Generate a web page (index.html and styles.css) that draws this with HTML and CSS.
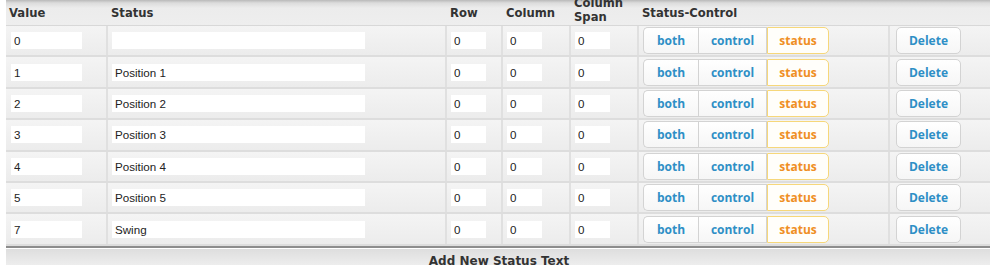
FILE: index.html
```html
<!DOCTYPE html>
<html>
<head>
<meta charset="utf-8">
<link rel="stylesheet" href="styles.css">
</head>
<body>
<div class="table">
  <div class="row head">
    <div class="th">Value</div>
    <div class="th">Status</div>
    <div class="th">Row</div>
    <div class="th">Column</div>
    <div class="th two">Column<br>Span</div>
    <div class="th">Status-Control</div>
    <div class="th"></div>
  </div>

  <div class="row">
    <div class="td"><input class="in val" value="0"></div>
    <div class="td"><input class="in stat" value=""></div>
    <div class="td"><input class="in num" value="0"></div>
    <div class="td"><input class="in num" value="0"></div>
    <div class="td"><input class="in num" value="0"></div>
    <div class="td"><div class="group"><span class="b both">both</span><span class="b ctrl">control</span><span class="b st">status</span></div></div>
    <div class="td"><span class="del">Delete</span></div>
  </div>
  <div class="row">
    <div class="td"><input class="in val" value="1"></div>
    <div class="td"><input class="in stat" value="Position 1"></div>
    <div class="td"><input class="in num" value="0"></div>
    <div class="td"><input class="in num" value="0"></div>
    <div class="td"><input class="in num" value="0"></div>
    <div class="td"><div class="group"><span class="b both">both</span><span class="b ctrl">control</span><span class="b st">status</span></div></div>
    <div class="td"><span class="del">Delete</span></div>
  </div>
  <div class="row">
    <div class="td"><input class="in val" value="2"></div>
    <div class="td"><input class="in stat" value="Position 2"></div>
    <div class="td"><input class="in num" value="0"></div>
    <div class="td"><input class="in num" value="0"></div>
    <div class="td"><input class="in num" value="0"></div>
    <div class="td"><div class="group"><span class="b both">both</span><span class="b ctrl">control</span><span class="b st">status</span></div></div>
    <div class="td"><span class="del">Delete</span></div>
  </div>
  <div class="row">
    <div class="td"><input class="in val" value="3"></div>
    <div class="td"><input class="in stat" value="Position 3"></div>
    <div class="td"><input class="in num" value="0"></div>
    <div class="td"><input class="in num" value="0"></div>
    <div class="td"><input class="in num" value="0"></div>
    <div class="td"><div class="group"><span class="b both">both</span><span class="b ctrl">control</span><span class="b st">status</span></div></div>
    <div class="td"><span class="del">Delete</span></div>
  </div>
  <div class="row">
    <div class="td"><input class="in val" value="4"></div>
    <div class="td"><input class="in stat" value="Position 4"></div>
    <div class="td"><input class="in num" value="0"></div>
    <div class="td"><input class="in num" value="0"></div>
    <div class="td"><input class="in num" value="0"></div>
    <div class="td"><div class="group"><span class="b both">both</span><span class="b ctrl">control</span><span class="b st">status</span></div></div>
    <div class="td"><span class="del">Delete</span></div>
  </div>
  <div class="row">
    <div class="td"><input class="in val" value="5"></div>
    <div class="td"><input class="in stat" value="Position 5"></div>
    <div class="td"><input class="in num" value="0"></div>
    <div class="td"><input class="in num" value="0"></div>
    <div class="td"><input class="in num" value="0"></div>
    <div class="td"><div class="group"><span class="b both">both</span><span class="b ctrl">control</span><span class="b st">status</span></div></div>
    <div class="td"><span class="del">Delete</span></div>
  </div>
  <div class="row">
    <div class="td"><input class="in val" value="7"></div>
    <div class="td"><input class="in stat" value="Swing"></div>
    <div class="td"><input class="in num" value="0"></div>
    <div class="td"><input class="in num" value="0"></div>
    <div class="td"><input class="in num" value="0"></div>
    <div class="td"><div class="group"><span class="b both">both</span><span class="b ctrl">control</span><span class="b st">status</span></div></div>
    <div class="td"><span class="del">Delete</span></div>
  </div>

  <div class="foot">Add New Status Text</div>
</div>
</body>
</html>
```

FILE: styles.css
```css
html, body {
  margin: 0;
  padding: 0;
  background: #ffffff;
}

.table {
  margin-left: 6px;
  width: 984px;
  font-family: "DejaVu Sans", Verdana, sans-serif;
  color: #333;
}

.row {
  display: grid;
  grid-template-columns: 102px 339px 56px 68px 68px 251px 100px;
  height: 31.4px;
  box-sizing: border-box;
  border-bottom: 2px solid #dddddd;
  background: linear-gradient(#f4f4f4, #ececec);
}

.row.head {
  height: 26px;
  border-bottom: 1px solid #d8d8d8;
  background: linear-gradient(#b9b9b9 0px, #dcdcdc 3px, #ececec 8px, #eeeeee 100%);
}

.th {
  font-size: 11.6px;
  font-weight: bold;
  padding-left: 3px;
  display: flex;
  align-items: center;
  line-height: 14px;
  color: #333;
}

.th.two {
  align-items: flex-start;
  margin-top: -4px;
}

.td {
  display: flex;
  align-items: center;
  padding-left: 4px;
  box-sizing: border-box;
  border-right: 2px solid #e0e0e0;
}

.td:first-child {
  padding-left: 5px;
}

.td:last-child {
  border-right: none;
  padding-left: 6px;
}

.in {
  box-sizing: border-box;
  height: 17px;
  border: none;
  background: #fff;
  font-family: "Liberation Sans", Arial, sans-serif;
  font-size: 11.6px;
  color: #222;
  padding: 0 3px;
  margin: 0;
  outline: none;
}

.in.val { width: 71px; }
.in.stat { width: 253px; }
.in.num { width: 35px; }

.group {
  display: flex;
  height: 27px;
}

.b, .del {
  box-sizing: border-box;
  display: flex;
  align-items: center;
  justify-content: center;
  height: 27px;
  font-family: "Open Sans", sans-serif;
  font-weight: 700;
  font-size: 12px;
  color: #2e8fc6;
  background: linear-gradient(#ffffff, #f6f6f6);
  border: 1px solid #d3d3d3;
}

.b.both {
  width: 55px;
  border-radius: 5px 0 0 5px;
  border-right: none;
}

.b.ctrl {
  width: 69px;
}

.b.st {
  width: 62px;
  color: #ef8f24;
  border: 1px solid #f6d77a;
  border-radius: 0 5px 5px 0;
  background: #fffefa;
}

.del {
  width: 65px;
  border-radius: 5px;
}

.foot {
  height: 18px;
  border-top: 2px solid #8d8d8d;
  box-shadow: inset 0 1px 0 #ffffff;
  background: linear-gradient(#dddddd, #eeeeee);
  text-align: center;
  font-size: 12px;
  font-weight: bold;
  line-height: 26px;
  color: #333;
  overflow: hidden;
  padding-left: 2px;
}
```
